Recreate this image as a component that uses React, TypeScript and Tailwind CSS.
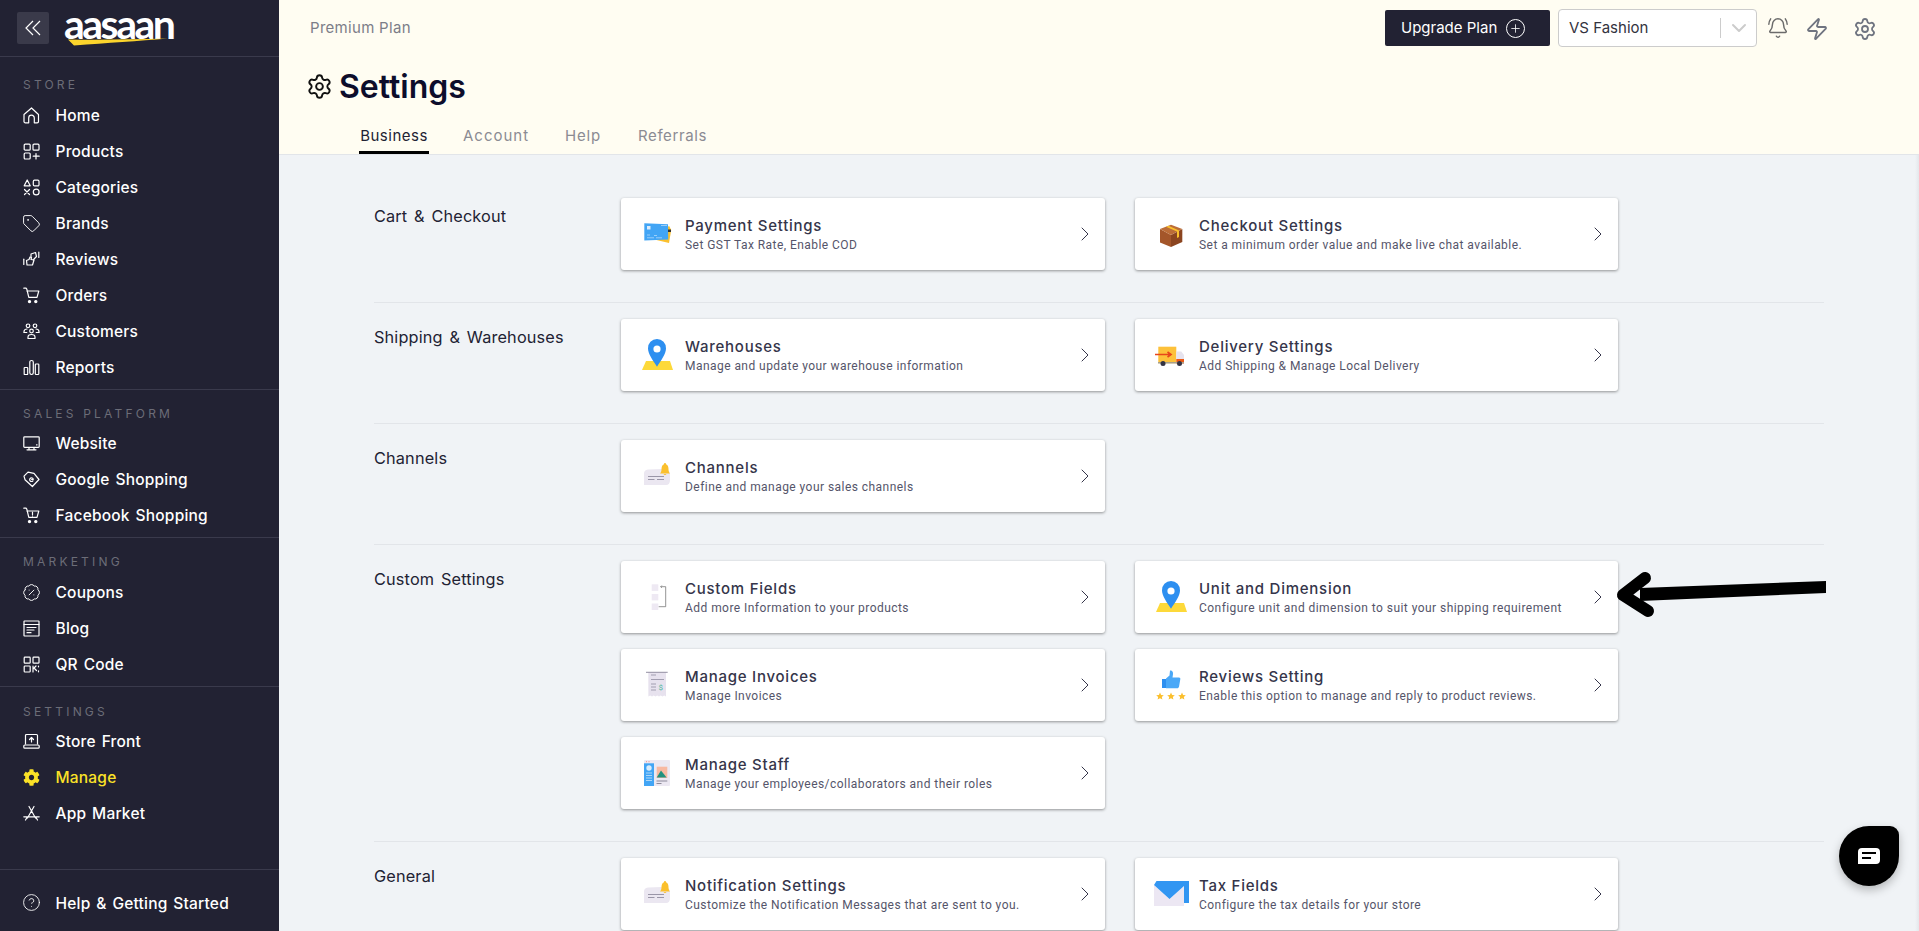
import React from "react";
import { Tag, BadgePercent, CircleHelp, BellRing, Zap, Settings, ChevronRight, ChevronDown, Plus } from "lucide-react";
import { FaCog } from "react-icons/fa";

const S = ({ children }: { children: React.ReactNode }) => (
  <svg width="17" height="17" viewBox="0 0 17 17" fill="none" stroke="#fff" strokeWidth="1.2" strokeLinecap="round" strokeLinejoin="round" className="shrink-0">{children}</svg>
);

const sideIcons: Record<string, React.ReactNode> = {
  Home: <S><path d="M1 7.5 8.5 1l7 6.5v7a1.3 1.3 0 0 1-1.3 1.3H11.300V11a2.800 2.800 0 0 0-5.600 0v4.800H2.300A1.300 1.300 0 0 1 1 14.500Z" /></S>,
  Products: <S><rect x="1.200" y="1.200" width="6" height="6" rx="1" /><rect x="10" y="1.200" width="6" height="6" rx="1" /><rect x="1.200" y="10" width="6" height="6" rx="1" /><path d="M13 10.500v5.500M10.200 13.200h6" /></S>,
  Categories: <S><path d="M4.200 1 7.200 6.800H1.200Z" /><rect x="10.300" y="1.200" width="5.700" height="5.700" rx="1.200" /><path d="M1.500 10.500l5 5M6.500 10.500l-5 5" /><circle cx="13.200" cy="13" r="2.900" /></S>,
  Brands: <Tag size={19} color="#fff" strokeWidth={1.2} className="shrink-0" />,
  Reviews: <S><path d="M.8 8.200v5.300" /><path d="M3.500 9.500 6 8.500 7 6l1.500.5L8 8.500l3 .5-1.500 5H4Z" /><path d="M8 6V3l4.500-1.500 1 4L11 8l-.5 1" /><path d="M15.800 1v5.500" /></S>,
  Orders: <S><path d="M.8 1.200h1.800c.6 0 1 .4 1.200 1l2 8.200h8.200l1.800-6.400H3.900" /><circle cx="6.500" cy="14.600" r="1.100" fill="#fff" /><circle cx="12.800" cy="14.600" r="1.100" fill="#fff" /></S>,
  Customers: <S><circle cx="5" cy="2.800" r="1.800" /><circle cx="12" cy="2.800" r="1.800" /><circle cx="8.500" cy="8" r="1.800" /><path d="M1 8.800c0-1.800 1.500-2.800 3-2.800M16 8.800c0-1.800-1.500-2.800-3-2.800M.8 9.500h3M13.200 9.500h3M5 15.500v-1.300c0-1.500 1.500-2.700 3.500-2.700s3.500 1.200 3.500 2.700v1.300Z" /></S>,
  Reports: <S><rect x="1.200" y="8.500" width="3.500" height="7" rx=".6" /><rect x="6.800" y="1.500" width="3.500" height="14" rx="1.700" /><rect x="12.300" y="5" width="3.500" height="10.500" rx=".8" /></S>,
  Website: <S><rect x=".8" y="1.800" width="15.400" height="10.500" rx=".8" /><path d="M4 14.800h9M6 12.500v2.200M11 12.500v2.200M13.500 9.800h.6" /></S>,
  "Google Shopping": <S><path d="M1 5.200 5 1.200l6 1.200 5 6.100-6.600 7-7.400-6.800Z" /><path d="M10.200 8.200a1.800 1.800 0 1 0-.3 1.600M8.600 8.500H10.200" /></S>,
  "Facebook Shopping": <S><path d="M.8 1.200h1.800c.6 0 1 .4 1.200 1l2 8.200h8.200l1.800-6.400H3.900" /><path d="M9.500 5.200v2.500M9.500 9v.1" /><circle cx="6.500" cy="14.600" r="1.100" fill="#fff" /><circle cx="12.800" cy="14.600" r="1.100" fill="#fff" /></S>,
  Coupons: <BadgePercent size={19} color="#fff" strokeWidth={1.2} className="shrink-0" />,
  Blog: <S><rect x="1" y="1" width="15" height="15" rx=".4" /><path d="M1 4.500h15M4 7.500h9M4 10h7M4 12.700h4" /></S>,
  "QR Code": <S><rect x="1.200" y="1.200" width="6" height="6" rx=".8" /><rect x="10" y="1.200" width="6" height="6" rx=".8" /><rect x="1.200" y="10" width="6" height="6" rx=".8" /><path d="M10 10v6M10 13l3-3M11.500 12.500l2 2M15.500 10.200v.6M15.500 14.800v1" /></S>,
  "Store Front": <S><path d="M2.500 11V2.500a1 1 0 0 1 1-1h10a1 1 0 0 1 1 1V11" /><rect x=".8" y="12" width="15.400" height="3.200" rx="1" /><path d="M8.500 9V4.500M6.500 6.500l2-2 2 2" /></S>,
  "App Market": <S><path d="M6 1.500 12.500 13M11 1.500 4.500 13M.8 11.800h15.400M2.500 15l1.500-2.500M14.500 15 13 12.500" /></S>,
  "Help & Getting Started": <CircleHelp size={19} color="#fff" strokeWidth={1.1} className="shrink-0" />,
};

const Item = ({ name, active }: { name: string; active?: boolean }) => (
  <div className="flex items-center h-[36px] pl-[23px]">
    <span className="w-[17px] h-[17px] flex items-center justify-center shrink-0">
      {active ? <FaCog size={17} color="#fbe227" /> : sideIcons[name]}
    </span>
    <span className={"relative top-[1px] ml-[15.500px] text-[15.500px] font-medium tracking-[0.2px] [word-spacing:1.500px] whitespace-nowrap " + (active ? "text-[#fbe227]" : "text-white")}>{name}</span>
  </div>
);

const Label = ({ t }: { t: string }) => (
  <div className="h-[20px] leading-[20px] pl-[23px] text-[12px] font-normal tracking-[3.200px] text-[#6c6d78]">{t}</div>
);

const Pin = () => (
  <svg viewBox="0 0 36 36" className="w-[36px] h-[36px]">
    <path d="M6 24h24l3 9H2Z" fill="#fdd93a" />
    <path d="M17 2a9 9 0 0 0-9 9.500c0 5.500 5 12 9 18.200 4-6.200 9-12.700 9-18.200A9 9 0 0 0 17 2Z" fill="#2d8ff0" />
    <circle cx="17" cy="12" r="3.600" fill="#fff" />
  </svg>
);
const Bubble = () => (
  <svg viewBox="0 0 36 36" className="w-[36px] h-[36px]">
    <path d="M4 27V15.500Q4 12 8 11.500L22 11Q30 11 30 16V22Q30 27 26 27Z" fill="#ebe7f1" />
    <path d="M8 18.500h16M8 21.500h6.500M17 21.500h7" stroke="#9a96a8" strokeWidth="1" />
    <path d="M25 5c.6 0 1 .5 1 1.200 2 .6 2.500 3 2.500 5 0 2 .6 3.200 1.500 4.300h-10c.9-1.100 1.500-2.300 1.500-4.300s.5-4.400 2.500-5c0-.7.400-1.200 1-1.200Z" fill="#fbc02d" />
    <path d="M23.500 16a1.600 1.600 0 0 0 3 0Z" fill="#fbc02d" />
  </svg>
);

const cardIcons: Record<string, React.ReactNode> = {
  payment: (
    <svg viewBox="0 0 36 36" className="w-[36px] h-[36px]">
      <path d="M8 22l21 5 2.200-13-2-4Z" fill="#fbc02d" />
      <path d="M4.300 7.300 28 8.300 28.200 23.500 4.300 24.500Z" fill="#42a5f5" />
      <rect x="7" y="10" width="3.500" height="3.500" fill="#dcecfb" />
      <path d="M21 9.500h6M7 19h3M14 19.500h3M7 21.800h7M16 21.800h6" stroke="#bfe0fa" strokeWidth=".7" />
      <rect x="28" y="13.500" width="3" height="2.500" fill="#333" />
    </svg>
  ),
  box: (
    <svg viewBox="0 0 36 36" className="w-[36px] h-[36px]">
      <path d="M6 13 17 19v12L6 26.500Z" fill="#a4562a" />
      <path d="M28.300 13 17 19v12l11.300-5Z" fill="#8b4520" />
      <path d="M6 13 17 8.700 28.300 13 17 19Z" fill="#bc6d38" />
      <path d="M12 10.800 23 15.500v6.500l2-1v-6.500L14.500 9.800Z" fill="#fbc02d" />
    </svg>
  ),
  pin: <Pin />,
  truck: (
    <svg viewBox="0 0 36 36" className="w-[36px] h-[36px]">
      <rect x="4.300" y="9.700" width="18" height="16.500" fill="#fdc13a" />
      <path d="M22.300 14.500h5L30 18v8H22.300Z" fill="#e6e3ee" />
      <path d="M22.300 22h7.700v4.500h-7.700Z" fill="#ef5a14" />
      <path d="M4 25h26v1.500H4Z" fill="#a69f8c" />
      <circle cx="9" cy="26.500" r="2.500" fill="#333344" /><circle cx="25.500" cy="26.500" r="2.500" fill="#333344" />
      <path d="M1 17.500h16M13.500 15l3.500 2.500-3.500 2.500" stroke="#e8461a" strokeWidth="1.700" fill="none" />
    </svg>
  ),
  bubble: <Bubble />,
  fields: (
    <svg viewBox="0 0 36 36" className="w-[36px] h-[36px]">
      <rect x="11.700" y="5.300" width="6.600" height="6.600" fill="#eee9f3" />
      <rect x="11.700" y="15" width="6.600" height="6.400" fill="#eee9f3" />
      <rect x="11.700" y="24.500" width="6.600" height="6.500" fill="#eee9f3" />
      <path d="M20.700 7.700h5v20h-7M21.800 6.500l-1.100 1.200 1.100 1.200" stroke="#777" strokeWidth=".8" fill="none" />
    </svg>
  ),
  invoice: (
    <svg viewBox="0 0 36 36" className="w-[36px] h-[36px]">
      <path d="M8.300 5.500h17.700v24l-1.800-1-1.700 1-1.800-1-1.700 1-1.800-1-1.700 1-1.800-1-1.700 1-1.800-1-1.800 1Z" fill="#e7e2ee" />
      <path d="M6 5.300h21.700" stroke="#77748a" strokeWidth=".8" />
      <path d="M11 8h5M11 12.500h13M11 17h5M11 20h5M11 23h5" stroke="#9a96a8" strokeWidth=".9" />
      <text x="18.500" y="22.500" fontSize="8" fill="#4fb8a0" fontFamily="Roboto, sans-serif">$</text>
    </svg>
  ),
  staff: (
    <svg viewBox="0 0 36 36" className="w-[36px] h-[36px]">
      <rect x="4" y="5" width="26" height="26" rx="1" fill="#ece8f2" />
      <rect x="4" y="8.300" width="10" height="22.700" fill="#42a5f5" />
      <circle cx="9" cy="13" r="2.700" fill="#d7ecfc" />
      <path d="M6 18h6M6 20.500h6M6 23h6M6 25.500h6" stroke="#b9dcf8" strokeWidth=".9" />
      <rect x="16.700" y="11.700" width="10.600" height="11.300" fill="#f8b9a2" />
      <path d="M16.700 22.500 21 15.500l5.600 7Z" fill="#21917f" />
      <path d="M16.500 26h10.800" stroke="#8c8999" strokeWidth="1" /><path d="M16.500 28.500h5" stroke="#8c8999" strokeWidth="1" />
      <path d="M6 6.700h1M8.500 6.700h1" stroke="#ef7a6a" strokeWidth=".8" />
    </svg>
  ),
  thumb: (
    <svg viewBox="0 0 36 36" className="w-[36px] h-[36px]">
      <path d="M8 12h4v9H8Z" fill="#2d8ff0" />
      <path d="M12 11.500 15.500 8.500 16 3.500c2.300-.4 3.300 1.500 3 3.800l-.5 3.200H25c1 0 1.500.8 1.300 1.700L25 19.800c-.2.900-.9 1.500-1.800 1.500H12Z" fill="#4aa8f7" />
      {[6, 17, 28].map((c) => (
        <path key={c} d={`M${c} 25.500l1.100 2.500 2.700.2-2 1.800.6 2.600L${c} 31.300l-2.400 1.300.6-2.600-2-1.800 2.700-.2Z`} fill="#fbbf2d" />
      ))}
    </svg>
  ),
  mail: (
    <svg viewBox="0 0 36 36" className="w-[36px] h-[36px]">
      <path d="M0 9l15.500 14L30 10v20H0Z" fill="#ece7f3" />
      <path d="M2.500 5H35V27H30V10L15.500 23 0 9Z" fill="#3296f2" />
    </svg>
  ),
};

const Card = ({ icon, title, desc, right }: { icon: string; title: string; desc: string; right?: boolean }) => (
  <div className={"h-[72px] bg-white rounded-[3px] shadow-[0_1px_3px_rgba(0,0,0,0.4)] flex items-center relative pl-[19px] " + (right ? "w-[483px]" : "w-[484px]")}>
    <span className="w-[36px] h-[36px] shrink-0">{cardIcons[icon]}</span>
    <div className="ml-[9px] mt-[1px]">
      <div className="text-[15px] leading-[22px] font-medium tracking-[0.75px] text-[#35354a]">{title}</div>
      <div className="text-[12px] leading-[17px] tracking-[0.45px] text-[#55556a] mt-[0.5px] whitespace-nowrap" style={{ fontFamily: "Roboto, sans-serif" }}>{desc}</div>
    </div>
    <ChevronRight size={24} strokeWidth={1} color="#35354a" className="absolute right-[8px] top-[24px]" />
  </div>
);

const Section = ({ label, first, last, children }: { label: string; first?: boolean; last?: boolean; children: React.ReactNode }) => (
  <div className={"flex w-[1450px] " + (first ? "pt-[43px] " : "pt-[16px] ") + (last ? "" : "pb-[32px] border-b border-[#e2e5e9]")}>
    <div className="w-[247px] mt-[6px] text-[16.300px] leading-[24px] tracking-[0.15px] [word-spacing:2px] text-[#222233] shrink-0">{label}</div>
    <div className="grid grid-cols-[484px_483px] gap-x-[30px] gap-y-[16px] content-start">{children}</div>
  </div>
);

export default function App() {
  return (
    <div className="relative flex w-[1919px] h-[931px] overflow-hidden bg-[#f0f3f6]" style={{ fontFamily: "Inter, sans-serif" }}>
      <aside className="w-[279px] h-[931px] bg-[#222233] shrink-0">
        <div className="h-[57px] border-b border-[#3a3a4c] relative">
          <div className="absolute left-[17px] top-[12px] w-[32px] h-[32px] rounded-[2px] bg-[#3a3a4a]">
            <svg width="32" height="32" viewBox="0 0 32 32" fill="none" stroke="#fff" strokeWidth="1.200"><path d="M16 9l-7 7 7 7M23 9l-7 7 7 7" /></svg>
          </div>
          <div className="absolute left-[64px] top-[1px] text-[41px] leading-[46px] font-bold tracking-[-2.500px] text-white" style={{ fontFamily: "Lato, sans-serif" }}>aasaan</div>
          <svg className="absolute left-[68px] top-[38px]" width="100" height="8" viewBox="0 0 100 8">
            <path d="M0 1.500C30 2 65 1.500 100 .5 70 3 40 5 6 7.500Z" fill="#fbd42c" />
          </svg>
        </div>
        <div className="h-[333px] pt-[18px] border-b border-[#3a3a4c]">
          <Label t="STORE" />
          <div className="mt-[2px]">{["Home", "Products", "Categories", "Brands", "Reviews", "Orders", "Customers", "Reports"].map((n) => <Item key={n} name={n} />)}</div>
        </div>
        <div className="h-[148px] pt-[14px] border-b border-[#3a3a4c]">
          <Label t="SALES PLATFORM" />
          <div className="mt-[1px]">{["Website", "Google Shopping", "Facebook Shopping"].map((n) => <Item key={n} name={n} />)}</div>
        </div>
        <div className="h-[149px] pt-[14px] border-b border-[#3a3a4c]">
          <Label t="MARKETING" />
          <div className="mt-[2px]">{["Coupons", "Blog", "QR Code"].map((n) => <Item key={n} name={n} />)}</div>
        </div>
        <div className="h-[183px] pt-[15px] border-b border-[#3a3a4c]">
          <Label t="SETTINGS" />
          <div className="mt-[1px]">
            <Item name="Store Front" />
            <Item name="Manage" active />
            <Item name="App Market" />
          </div>
        </div>
        <div className="h-[65px] flex items-center"><Item name="Help & Getting Started" /></div>
      </aside>

      <main className="flex-1 min-w-0">
        <header className="h-[155px] bg-[#fffdf2] border-b border-[#e2e5e9] relative">
          <div className="absolute left-[31px] top-[17px] text-[15px] leading-[22px] tracking-[0.3px] text-[#7c7d88]" >Premium Plan</div>
          <div className="absolute left-[1106px] top-[10px] w-[165px] h-[36px] rounded-[2px] bg-[#222233] flex items-center pl-[16px] text-white text-[15px]">
            Upgrade Plan
            <span className="ml-[9px] w-[19px] h-[19px] rounded-full border border-white flex items-center justify-center"><Plus size={13} strokeWidth={1.5} /></span>
          </div>
          <div className="absolute left-[1279px] top-[9px] w-[199px] h-[38px] rounded-[4px] border border-[#cccccc] bg-white flex items-center pl-[10px] text-[15px] text-[#333340]">
            VS Fashion
            <span className="absolute left-[161px] top-[8px] w-px h-[20px] bg-[#cccccc]" />
            <ChevronDown size={24} color="#cccccc" strokeWidth={2} className="absolute left-[168px] top-[6px]" />
          </div>
          <BellRing size={22} color="#6b6b6b" strokeWidth={1.6} className="absolute left-[1488px] top-[17px]" />
          <Zap size={24} color="#6f7480" strokeWidth={1.8} className="absolute left-[1526px] top-[17px]" />
          <Settings size={24} color="#6f7480" strokeWidth={1.8} className="absolute left-[1574px] top-[17px]" />
          <Settings size={27} color="#111" strokeWidth={1.7} className="absolute left-[27px] top-[73px]" />
          <div className="absolute left-[60px] top-[66px] text-[32px] leading-[42px] font-semibold text-[#0d0d2b]">Settings</div>
          <div className="absolute left-[80px] top-[124px] h-[30px] w-[70px] border-b-[3px] border-black text-[15px] leading-[24px] tracking-[0.5px] text-[#222233] text-center">Business</div>
          <div className="absolute left-[184px] top-[124px] text-[15px] leading-[24px] tracking-[1px] text-[#8b8b93]">Account</div>
          <div className="absolute left-[286px] top-[124px] text-[15px] leading-[24px] tracking-[0.8px] text-[#8b8b93]">Help</div>
          <div className="absolute left-[359px] top-[124px] text-[15px] leading-[24px] tracking-[0.6px] text-[#8b8b93]">Referrals</div>
        </header>
        <div className="pl-[95px]">
          <Section label="Cart & Checkout" first>
            <Card icon="payment" title="Payment Settings" desc="Set GST Tax Rate, Enable COD" />
            <Card icon="box" title="Checkout Settings" desc="Set a minimum order value and make live chat available." right />
          </Section>
          <Section label="Shipping & Warehouses">
            <Card icon="pin" title="Warehouses" desc="Manage and update your warehouse information" />
            <Card icon="truck" title="Delivery Settings" desc="Add Shipping & Manage Local Delivery" right />
          </Section>
          <Section label="Channels">
            <Card icon="bubble" title="Channels" desc="Define and manage your sales channels" />
          </Section>
          <Section label="Custom Settings">
            <Card icon="fields" title="Custom Fields" desc="Add more Information to your products" />
            <Card icon="pin" title="Unit and Dimension" desc="Configure unit and dimension to suit your shipping requirement" right />
            <Card icon="invoice" title="Manage Invoices" desc="Manage Invoices" />
            <Card icon="thumb" title="Reviews Setting" desc="Enable this option to manage and reply to product reviews." right />
            <Card icon="staff" title="Manage Staff" desc="Manage your employees/collaborators and their roles" />
          </Section>
          <Section label="General" last>
            <Card icon="bubble" title="Notification Settings" desc="Customize the Notification Messages that are sent to you." />
            <Card icon="mail" title="Tax Fields" desc="Configure the tax details for your store" right />
          </Section>
        </div>
      </main>

      <svg className="absolute left-[1610px] top-[560px]" width="220" height="70" viewBox="0 0 220 70">
        <path d="M216 21 216 33 30 41 30 28Z" fill="#000" />
        <path d="M35 18 13 35 38 51" fill="none" stroke="#000" strokeWidth="12" strokeLinecap="round" strokeLinejoin="round" />
      </svg>

      <div className="absolute left-[1839px] top-[826px] w-[60px] h-[60px] bg-black rounded-tl-[30px] rounded-bl-[30px] rounded-br-[30px] rounded-tr-[9px] shadow-[0_4px_10px_rgba(0,0,0,0.25)] flex items-center justify-center">
        <svg width="24" height="18" viewBox="0 0 24 18">
          <path d="M5 1h14a4 4 0 0 1 4 4v8a4 4 0 0 1-4 4H1V5a4 4 0 0 1 4-4Z" fill="#fff" />
          <path d="M5 6h14M5 11h9" stroke="#000" strokeWidth="1.800" />
        </svg>
      </div>
      <div className="absolute right-0 top-[155px] w-[4px] h-[776px] bg-gradient-to-r from-[#f0f3f6] to-[#e4e7eb]" />
    </div>
  );
}
